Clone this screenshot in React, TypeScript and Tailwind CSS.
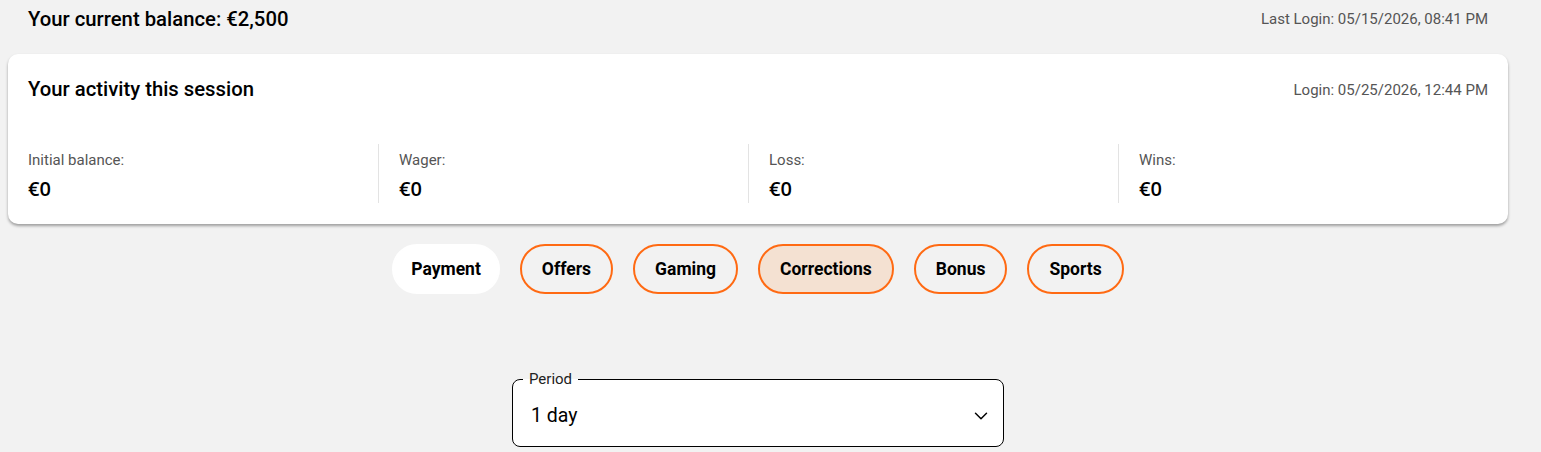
import React from 'react';
import { ChevronDown } from 'lucide-react';

const stats = [
  { label: 'Initial balance:', value: '€0' },
  { label: 'Wager:', value: '€0' },
  { label: 'Loss:', value: '€0' },
  { label: 'Wins:', value: '€0' },
];

const tabs = [
  { name: 'Payment', state: 'plain' },
  { name: 'Offers', state: 'outline' },
  { name: 'Gaming', state: 'outline' },
  { name: 'Corrections', state: 'active' },
  { name: 'Bonus', state: 'outline' },
  { name: 'Sports', state: 'outline' },
];

const App: React.FC = () => {
  return (
    <div className="min-h-screen bg-[#f2f2f2] font-['Roboto',sans-serif] text-black w-[1541px]">
      <div className="w-[1500px] ml-2">
        {/* Balance header */}
        <div className="flex items-center justify-between px-5 h-[38px]">
          <h2 className="text-[20.3px] font-medium leading-6">Your current balance: €2,500</h2>
          <span className="text-[15px] text-[#555] leading-5">Last Login: 05/15/2026, 08:41 PM</span>
        </div>

        {/* Session card */}
        <div className="mt-4 bg-white rounded-[10px] shadow-[0_2px_3px_rgba(0,0,0,0.35)] pt-[23px] pb-[21px] pr-5">
          <div className="flex items-center justify-between pl-5">
            <h3 className="text-[20.3px] font-medium leading-6">Your activity this session</h3>
            <span className="text-[15px] text-[#555] leading-5 mt-[2px]">Login: 05/25/2026, 12:44 PM</span>
          </div>
          <div className="grid grid-cols-4 mt-[43px]">
            {stats.map((s, i) => (
              <div key={s.label} className={`pl-5 pt-[6px] pb-[2px] ${i > 0 ? 'border-l border-[#e3e3e3]' : ''}`}>
                <div className="text-[15px] text-[#555] leading-5">{s.label}</div>
                <div className="mt-[7px] text-[20px] font-semibold leading-6 font-['Open_Sans',sans-serif]">{s.value}</div>
              </div>
            ))}
          </div>
        </div>

        {/* Category tabs */}
        <div className="mt-5 flex justify-center gap-[20px]">
          {tabs.map((t) => (
            <button
              key={t.name}
              className={`h-[50px] rounded-full text-[17.5px] font-bold leading-5 ${
                t.state === 'plain'
                  ? 'bg-white border-2 border-white px-[17px]'
                  : t.state === 'active'
                  ? 'bg-[#f4e1d2] border-2 border-[#ff6a13] px-5'
                  : 'bg-transparent border-2 border-[#ff6a13] px-5'
              }`}
            >
              {t.name}
            </button>
          ))}
        </div>

        {/* Period select */}
        <div className="mt-[77px] flex justify-center">
          <fieldset className="w-[492px] h-[76px] border border-black rounded-[8px] pl-[10px] pr-[11px] bg-white">
            <legend className="px-[6px] text-[15px] leading-4 text-[#222]">Period</legend>
            <div className="flex items-center justify-between h-[52px] pl-2 mt-[3px]">
              <span className="text-[19.5px] leading-6 pl-[-1px]">1 day</span>
              <ChevronDown size={22} strokeWidth={1.6} className="text-black" />
            </div>
          </fieldset>
        </div>
      </div>
    </div>
  );
};

export default App;
